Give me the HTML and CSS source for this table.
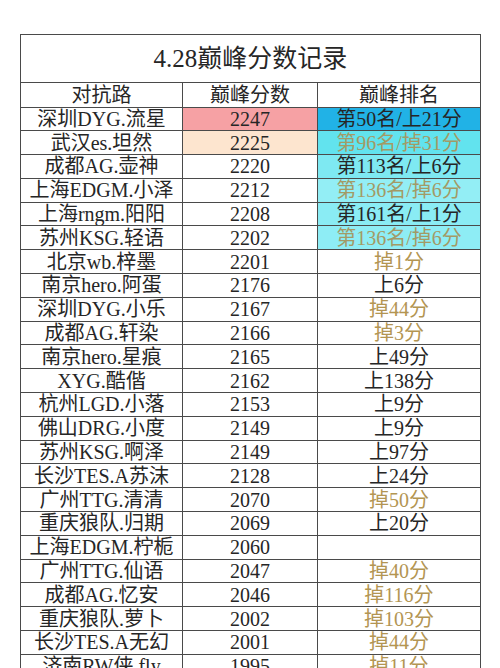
FILE: index.html
```html
<!DOCTYPE html>
<html lang="zh-CN">
<head>
<meta charset="utf-8">
<title>4.28巅峰分数记录</title>
<link rel="stylesheet" href="styles.css">
</head>
<body>
<table class="sheet">
  <colgroup>
    <col class="c1"><col class="c2"><col class="c3">
  </colgroup>
  <tr class="title"><td colspan="3">4.28巅峰分数记录</td></tr>
  <tr class="head"><td>对抗路</td><td>巅峰分数</td><td>巅峰排名</td></tr>
  <tr><td>深圳DYG.流星</td><td class="pink">2247</td><td class="blue">第50名/上21分</td></tr>
  <tr><td>武汉es.坦然</td><td class="peach">2225</td><td class="cy1 gold">第96名/掉31分</td></tr>
  <tr><td>成都AG.壶神</td><td>2220</td><td class="cy2">第113名/上6分</td></tr>
  <tr><td>上海EDGM.小泽</td><td>2212</td><td class="cy3 gold">第136名/掉6分</td></tr>
  <tr><td>上海rngm.阳阳</td><td>2208</td><td class="cy4">第161名/上1分</td></tr>
  <tr><td>苏州KSG.轻语</td><td>2202</td><td class="cy5 gold">第136名/掉6分</td></tr>
  <tr><td>北京wb.梓墨</td><td>2201</td><td class="gold">掉1分</td></tr>
  <tr><td>南京hero.阿蛋</td><td>2176</td><td>上6分</td></tr>
  <tr><td>深圳DYG.小乐</td><td>2167</td><td class="gold">掉44分</td></tr>
  <tr><td>成都AG.轩染</td><td>2166</td><td class="gold">掉3分</td></tr>
  <tr><td>南京hero.星痕</td><td>2165</td><td>上49分</td></tr>
  <tr><td>XYG.酷偕</td><td>2162</td><td>上138分</td></tr>
  <tr><td>杭州LGD.小落</td><td>2153</td><td>上9分</td></tr>
  <tr><td>佛山DRG.小度</td><td>2149</td><td>上9分</td></tr>
  <tr><td>苏州KSG.啊泽</td><td>2149</td><td>上97分</td></tr>
  <tr><td>长沙TES.A苏沫</td><td>2128</td><td>上24分</td></tr>
  <tr><td>广州TTG.清清</td><td>2070</td><td class="gold">掉50分</td></tr>
  <tr><td>重庆狼队.归期</td><td>2069</td><td>上20分</td></tr>
  <tr><td>上海EDGM.柠栀</td><td>2060</td><td></td></tr>
  <tr><td>广州TTG.仙语</td><td>2047</td><td class="gold">掉40分</td></tr>
  <tr><td>成都AG.忆安</td><td>2046</td><td class="gold">掉116分</td></tr>
  <tr><td>重庆狼队.萝卜</td><td>2002</td><td class="gold">掉103分</td></tr>
  <tr><td>长沙TES.A无幻</td><td>2001</td><td class="gold">掉44分</td></tr>
  <tr><td>济南RW侠.fly</td><td>1995</td><td class="gold">掉11分</td></tr>
</table>
</body>
</html>
```

FILE: styles.css
```css
html, body {
  margin: 0;
  padding: 0;
  background: #ffffff;
  overflow: hidden;
  height: 668px;
}

.sheet {
  margin: 34px 0 0 20px;
  width: 460px;
  border-collapse: collapse;
  table-layout: fixed;
  font-family: "Liberation Serif", "Noto Sans CJK SC", serif;
  font-size: 20px;
  color: #262626;
}

.c1 { width: 162px; }
.c2 { width: 135px; }
.c3 { width: 163px; }

.sheet tr { height: 23.8px; }

.sheet td {
  border: 1px solid #4a4a4a;
  padding: 0;
  height: 22.8px;
  line-height: 14px;
  vertical-align: middle;
  text-align: center;
  white-space: nowrap;
  overflow: hidden;
}

.sheet .title { height: 48px; }

.sheet .title td {
  height: 47px;
  font-size: 25px;
  line-height: 20px;
}

.sheet .head { height: 24.5px; }

.sheet .head td {
  height: 23.5px;
}

.pink { background: #f6a1a4; }
.peach { background: #fde5cf; }
.blue { background: #21b2e6; }
.cy1 { background: #62e3ee; }
.cy2 { background: #7ee9f2; }
.cy3 { background: #93eef5; }
.cy4 { background: #8aecf4; }
.cy5 { background: #8eedf5; }

.gold { color: #b39552; }
.cy1.gold, .cy3.gold, .cy5.gold { color: #a39a66; }
```
